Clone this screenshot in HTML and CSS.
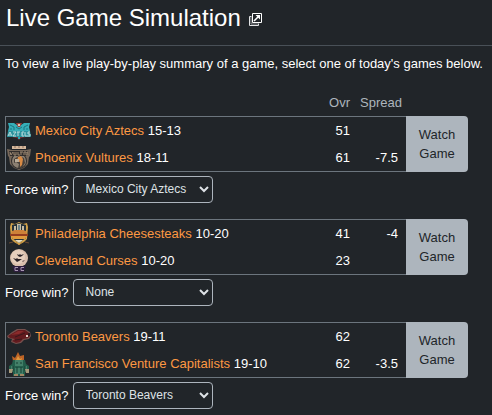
FILE: index.html
```
<!DOCTYPE html>
<html lang="en">
<head>
<meta charset="utf-8">
<title>Live Game Simulation</title>
<link rel="stylesheet" href="styles.css">
</head>
<body>
<header class="page-title">
  <h1>Live Game Simulation</h1>
  <a class="popout" href="#" aria-label="Open in new window">
    <svg viewBox="0 0 13 13" width="13" height="13" fill="none" stroke="#fff">
      <path d="M3.500 .5h9v9h-9z"/>
      <path d="M2.500 3.500h-2v9h9v-2" stroke="#e2e3e5"/>
      <path d="M2 4v7h7" stroke="#8a8d90"/>
      <path d="M5 8l4-4" stroke-width="1.600"/>
      <path d="M6.500 2h4.500v4.500z" fill="#fff" stroke="none"/>
    </svg>
  </a>
</header>
<main>
  <p class="intro">To view a live play-by-play summary of a game, select one of today's games below.</p>
  <div class="columns"><span class="ovr">Ovr</span><span class="spread-head">Spread</span></div>

  <section class="game">
    <div class="matchup">
      <div class="teams">
        <div class="team">
          <svg class="logo" viewBox="0 0 24 24">
            <path d="M1 4h6l3 2h4l3-2h6l-1 4 1 4H1l1-4z" fill="#36aeb8"/>
            <path d="M3 6l4 2v3M21 6l-4 2v3M9 8l3 2 3-2M5 10H3m16 0h2" stroke="#1d7480" fill="none"/>
            <path d="M9 4h6l-2 4h-2z" fill="#9a3f38"/><path d="M11 5h2v2h-2z" fill="#d8c5b5"/>
            <path d="M1 12h22l1 6H0z" fill="#2b929d"/>
            <path d="M1 17l2-4 2 4M2 16h2M6 13h3l-3 4h3M11 13v4M10 13h3M17 13h-2v4h2m-2-2h1M18 13v4h2M23 13h-2v2h2v2h-3" stroke="#b9dcdc" fill="none"/>
            <path d="M5 18h14l-5 1-2 2-2-2z" fill="#70353a"/><path d="M11 18h2v2h-2z" fill="#2ea7b1"/>
          </svg>
          <span class="name"><a href="#">Mexico City Aztecs</a> 15-13</span>
          <span class="ovr">51</span><span class="spread"></span>
        </div>
        <div class="team">
          <svg class="logo" viewBox="0 0 24 24">
            <path d="M5 0h14v3H5z" fill="#d5b89c"/><path d="M7 1h2m2 0h2m2 0h2" stroke="#8d725f"/>
            <path d="M0 3l5 1h14l5-1-1 7-1 1-1 7-4 4-5 2-5-2-4-4-1-7-1-1z" fill="#77685a"/>
            <circle cx="12" cy="15" r="8" fill="#302d2c"/><circle cx="12" cy="15" r="7" fill="#8c8072"/>
            <path d="M2 5h20l-1 5H3z" fill="#322e2d"/>
            <path d="M3 6l1 3 2-3M7 6v3h2V6M11 6v3h2M14 6v3m-1-3h3M17 9V6h2v3M22 6h-2v1h1v2h-2" stroke="#9c8873" fill="none"/>
            <path d="M7 13l5-3 5 2 1 5-3 5h-4l1-4-3-2-2 1z" fill="#48403a"/>
            <path d="M11 11l3-1 2 3-1 6-2 2v-5l-3-1z" fill="#d98b45"/>
            <path d="M8 13h4v3H8z" fill="#b8ab98"/>
          </svg>
          <span class="name"><a href="#">Phoenix Vultures</a> 18-11</span>
          <span class="ovr">61</span><span class="spread">-7.5</span>
        </div>
      </div>
      <button class="watch" type="button">Watch Game</button>
    </div>
    <div class="force">
      <label for="force1">Force win?</label>
      <select id="force1"><option>None</option><option selected>Mexico City Aztecs</option><option>Phoenix Vultures</option></select>
    </div>
  </section>

  <section class="game">
    <div class="matchup">
      <div class="teams">
        <div class="team">
          <svg class="logo" viewBox="0 0 24 24">
            <path d="M4 1l4 1 4-2 4 2 4-1 1 4-1 12-3 3-5 3-5-3-3-3L3 5z" fill="#d2a249"/>
            <path d="M5 3l7-2 7 2v13l-7 5-7-5z" fill="#26333b"/>
            <path d="M7 4h2v6H7zM15 4h2v6h-2zM10 2h4v7h-4z" fill="#c8bda2"/>
            <path d="M11 3h2v5h-2z" fill="#6f858b"/>
            <path d="M4 12l1-3 3-1h8l3 1 1 3z" fill="#ce8138"/>
            <path d="M3 12h18v2H3z" fill="#943d1f"/><path d="M4 14h16l-2 3H6z" fill="#e09a3e"/>
            <path d="M8 18h8l-4 3z" fill="#e8dfc4"/>
            <path d="M2 21l4-1m12 0l4 1" stroke="#6b4b32"/><path d="M9 20l3 3 3-3" stroke="#b9873d" fill="none"/>
          </svg>
          <span class="name"><a href="#">Philadelphia Cheesesteaks</a> 10-20</span>
          <span class="ovr">41</span><span class="spread">-4</span>
        </div>
        <div class="team">
          <svg class="logo" viewBox="0 0 24 24">
            <circle cx="12" cy="9" r="9" fill="#d9beac"/><circle cx="11" cy="8" r="7" fill="#e5cebd"/>
            <path d="M10 5l2 1 1-1 1 1 3-1-2 2-2 1-2-1zM6 9l3 1 1-1 1 1 4 0-3 2-2 1-2-2z" fill="#292127"/>
            <path d="M15 12l3-1-2 2z" fill="#5a4545"/>
            <path d="M5 17h14l-2 6H7z" fill="#2c1d3d"/>
            <path d="M11 18.500H8v3h3M17 18.500h-3v3h3" stroke="#a795b1" fill="none"/>
          </svg>
          <span class="name"><a href="#">Cleveland Curses</a> 10-20</span>
          <span class="ovr">23</span><span class="spread"></span>
        </div>
      </div>
      <button class="watch" type="button">Watch Game</button>
    </div>
    <div class="force">
      <label for="force2">Force win?</label>
      <select id="force2"><option selected>None</option><option>Philadelphia Cheesesteaks</option><option>Cleveland Curses</option></select>
    </div>
  </section>

  <section class="game">
    <div class="matchup">
      <div class="teams">
        <div class="team">
          <svg class="logo" viewBox="0 0 24 24">
            <path d="M0 11l5-4 5-3 8 0 5 3 1 4-2 3-5 1-3 3-5 1-5-2 1-3-4-1z" fill="#76504d"/>
            <path d="M1 11l5-3 5-3 7 0 4 3 1 3-2 2-5 1-3 3-4 1-4-2 3-2-5-1z" fill="#641b1f"/>
            <path d="M4 10l7-4 6 0-5 3z" fill="#8a2b2b"/>
            <path d="M8 12l10-4M8 15l7-1" stroke="#3a171b" fill="none"/>
            <path d="M19 10h2v2h-2z" fill="#e6d5cc"/><path d="M21 8h2v3h-2z" fill="#30191d"/>
          </svg>
          <span class="name"><a href="#">Toronto Beavers</a> 19-11</span>
          <span class="ovr">62</span><span class="spread"></span>
        </div>
        <div class="team">
          <svg class="logo" viewBox="0 0 24 24">
            <path d="M6 9L5 4l3 2 3-6 2 4 4-1v6z" fill="#bd6426"/><path d="M9 8l2-4 2 3 2-1-1 3z" fill="#e09a3f"/>
            <path d="M6 8h12l1 4 3 2v5l-4 1v4H6v-4l-4-1v-5l3-2z" fill="#235e4b"/>
            <path d="M8 8h8v6H8zM8 16h8v6H8zM4 14h2v4H4zM18 14h2v4h-2z" fill="#438069"/>
            <path d="M9 11h2m2 0h2M10 15v6m4-6v6M6 14v5m12-5v5" stroke="#183e35"/>
            <path d="M2 17h4l-1 4H2zM18 17h4v4h-3z" fill="#a79a7c"/><path d="M7 22h4v2H7zM13 22h4v2h-4z" fill="#a18562"/>
          </svg>
          <span class="name"><a href="#">San Francisco Venture Capitalists</a> 19-10</span>
          <span class="ovr">62</span><span class="spread">-3.5</span>
        </div>
      </div>
      <button class="watch" type="button">Watch Game</button>
    </div>
    <div class="force">
      <label for="force3">Force win?</label>
      <select id="force3"><option>None</option><option selected>Toronto Beavers</option><option>San Francisco Venture Capitalists</option></select>
    </div>
  </section>
</main>
</body>
</html>
```
FILE: styles.css
```
* {
  box-sizing: border-box;
}

body {
  margin: 0;
  background: #212529;
  color: #fff;
  font-family: "Liberation Sans", Arial, sans-serif;
  font-size: 13px;
  line-height: 19px;
}

a {
  color: #fd9843;
  text-decoration: none;
}

.page-title {
  display: flex;
  align-items: center;
  gap: 8px;
  height: 46px;
  padding: 0 6px 9px;
  border-bottom: 1px solid #495057;
}

h1 {
  margin: 0;
  font-size: 24px;
  font-weight: 400;
  line-height: 30px;
}

.popout {
  padding-top: 2px;
}

.popout svg {
  display: block;
}

main {
  padding: 8px 5px 6px;
}

.intro {
  margin: 0 0 20px;
}

.columns,
.matchup {
  max-width: 463px;
}

.columns {
  display: flex;
  justify-content: flex-end;
  padding: 0 66px 4px 0;
  color: #adb5bd;
}

.ovr,
.spread {
  text-align: right;
}

.spread-head {
  width: 52px;
  text-align: right;
}

.spread {
  width: 48px;
}

.game + .game {
  margin-top: 16px;
}

.matchup {
  display: flex;
}

.teams {
  flex: 1;
  border: 1px solid #6c757d;
  border-right: 0;
}

.team {
  display: flex;
  align-items: center;
  height: 27px;
  padding: 0 8px 0 1px;
}

.logo {
  width: 24px;
  height: 24px;
  margin-right: 4px;
}

.name {
  flex: 1;
}

.watch {
  width: 62px;
  padding: 0 8px;
  border: 0;
  border-radius: 0 4px 4px 0;
  background: #adb5bd;
  color: #212529;
  font: inherit;
}

.force {
  display: flex;
  align-items: center;
  gap: 4px;
  margin-top: 4px;
}

select {
  width: 140px;
  height: 27px;
  padding: 0 8px 2px;
  border: 1px solid #adb5bd;
  border-radius: 4px;
  background: #212529;
  color: #dee2e6;
  font-family: inherit;
  font-size: 12px;
}
```
